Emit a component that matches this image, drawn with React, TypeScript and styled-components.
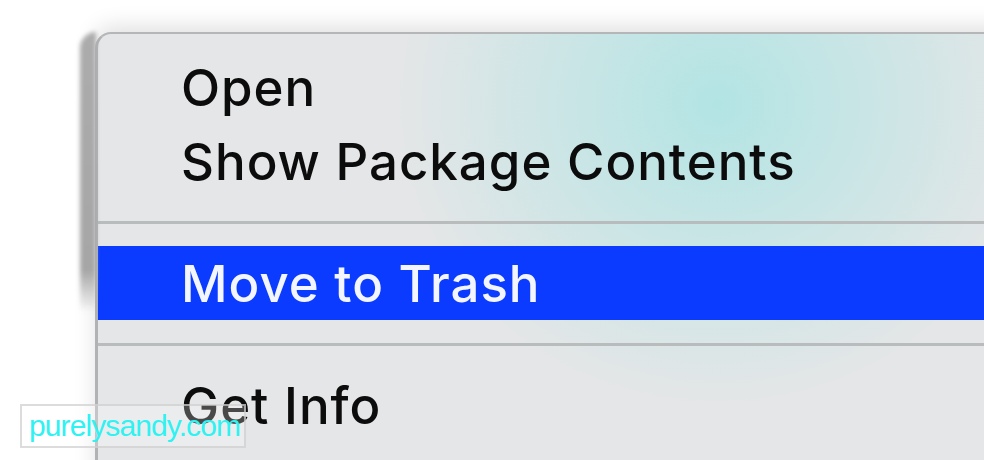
import React from 'react'
import styled, { createGlobalStyle } from 'styled-components'

type Entry = { label: string } | { separator: true }

const entries: Entry[] = [
  { label: 'Open' },
  { label: 'Show Package Contents' },
  { separator: true },
  { label: 'Move to Trash' },
  { separator: true },
  { label: 'Get Info' },
  { label: 'Rename' },
]

const ACTIVE = 'Move to Trash'

export default function App() {
  return (
    <>
      <GlobalStyle />
      <Stage>
        <Menu>
          {entries.map((entry, i) =>
            'separator' in entry ? (
              <Separator key={i} />
            ) : (
              <Item key={i} $active={entry.label === ACTIVE}>
                {entry.label}
              </Item>
            )
          )}
        </Menu>
        <Watermark>purelysandy.com</Watermark>
      </Stage>
    </>
  )
}

const GlobalStyle = createGlobalStyle`
  html, body {
    margin: 0;
    padding: 0;
    background: #ffffff;
    overflow: hidden;
  }
`

const Stage = styled.div`
  position: relative;
  width: 984px;
  height: 460px;
  overflow: hidden;
  padding: 32px 0 0 95px;
  box-sizing: border-box;
  background: #ffffff;
`

const Menu = styled.div`
  position: relative;
  display: flex;
  flex-direction: column;
  width: 920px;
  padding-top: 16px;
  border-top: 2px solid #b4b6b7;
  border-left: 3px solid #b0b2b3;
  border-top-left-radius: 16px;
  background:
    radial-gradient(ellipse 320px 300px at 620px 70px, rgba(176, 228, 228, 0.95), rgba(176, 228, 228, 0) 100%),
    #e4e6e7;
  box-shadow: 0 -6px 22px rgba(0, 0, 0, 0.12);
  font-family: Inter, 'Liberation Sans', Arial, sans-serif;

  &::before {
    content: '';
    position: absolute;
    left: -18px;
    top: -2px;
    width: 16px;
    height: 280px;
    border-top-left-radius: 16px;
    background: linear-gradient(to bottom, #acacac 0%, #a6a6a6 85%, rgba(180, 180, 180, 0) 100%);
    filter: blur(2px);
  }
`

const Item = styled.div<{ $active?: boolean }>`
  display: flex;
  align-items: center;
  height: 74px;
  padding-left: 83px;
  font-size: 51px;
  font-weight: 500;
  letter-spacing: 1px;
  white-space: nowrap;
  color: ${(p) => (p.$active ? '#f4f6ff' : '#0c0c0c')};
  background: ${(p) => (p.$active ? '#0a3bff' : 'transparent')};
`

const Separator = styled.div`
  display: flex;
  align-items: center;
  height: 48px;

  &::after {
    content: '';
    flex: 1;
    height: 3px;
    background: #b9bcbd;
  }
`

const Watermark = styled.div`
  position: absolute;
  left: 20px;
  top: 404px;
  width: 226px;
  height: 44px;
  display: flex;
  align-items: center;
  padding-left: 7px;
  box-sizing: border-box;
  border: 2px solid rgba(205, 205, 205, 0.7);
  background: rgba(255, 255, 255, 0.25);
  color: #2ff2f2;
  font-family: 'Liberation Sans', Arial, sans-serif;
  font-size: 30px;
  letter-spacing: -0.9px;
  white-space: nowrap;
`
